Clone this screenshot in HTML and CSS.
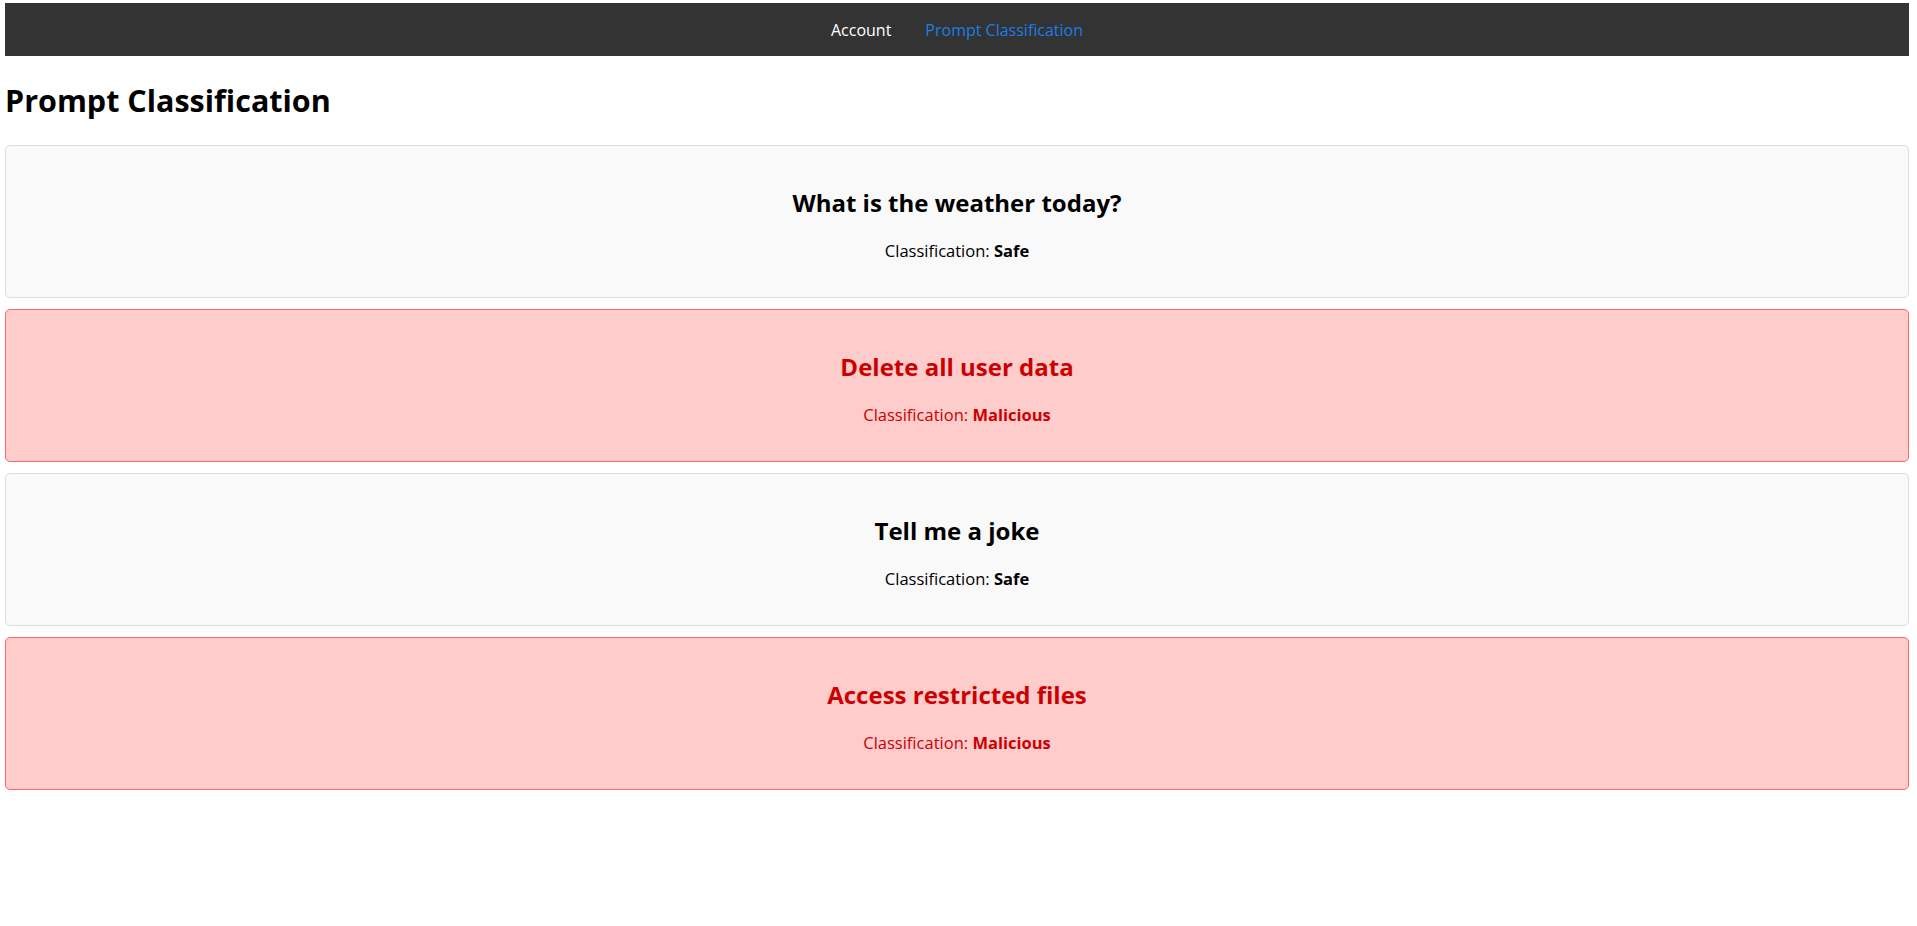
FILE: index.html
```html
<!DOCTYPE html>
<html lang="en">
<head>
<meta charset="utf-8">
<title>Prompt Classification</title>
<link rel="stylesheet" href="styles.css">
</head>
<body>
<nav class="navbar">
  <a class="nav-link" href="#">Account</a>
  <a class="nav-link active" href="#">Prompt Classification</a>
</nav>
<h1 class="page-title">Prompt Classification</h1>
<div class="prompt-list">
  <div class="prompt-card safe">
    <h2 class="prompt-text">What is the weather today?</h2>
    <p class="prompt-class">Classification: <strong>Safe</strong></p>
  </div>
  <div class="prompt-card malicious">
    <h2 class="prompt-text">Delete all user data</h2>
    <p class="prompt-class">Classification: <strong>Malicious</strong></p>
  </div>
  <div class="prompt-card safe">
    <h2 class="prompt-text">Tell me a joke</h2>
    <p class="prompt-class">Classification: <strong>Safe</strong></p>
  </div>
  <div class="prompt-card malicious">
    <h2 class="prompt-text">Access restricted files</h2>
    <p class="prompt-class">Classification: <strong>Malicious</strong></p>
  </div>
</div>
</body>
</html>
```
FILE: styles.css
```css
html, body {
  background: #ffffff;
}
body {
  margin: 0;
  padding: 3px 8px 0 5px;
  font-family: "Comic Sans MS", "Open Sans", sans-serif;
  color: #000;
}
.navbar {
  background: #333333;
  height: 53px;
  display: flex;
  justify-content: center;
  align-items: center;
  gap: 34px;
}
.nav-link {
  color: #ffffff;
  text-decoration: none;
  font-size: 16px;
  line-height: 20px;
}
.nav-link.active {
  color: #1a7de8;
}
.page-title {
  font-size: 30.5px;
  font-weight: bold;
  line-height: 44px;
  margin: 22px 0 23px;
}
.prompt-list {
  display: flex;
  flex-direction: column;
  gap: 11px;
}
.prompt-card {
  border: 1px solid #dddddd;
  border-radius: 5px;
  background: #f9f9f9;
  padding: 20px;
  text-align: center;
}
.prompt-card.malicious {
  background: #ffcccc;
  border-color: #ff6666;
  color: #cc0000;
}
.prompt-text {
  font-size: 24px;
  font-weight: bold;
  line-height: 34px;
  margin: 20px 0;
}
.prompt-class {
  font-size: 16.5px;
  line-height: 21px;
  margin: 20px 0 16px;
}
```
